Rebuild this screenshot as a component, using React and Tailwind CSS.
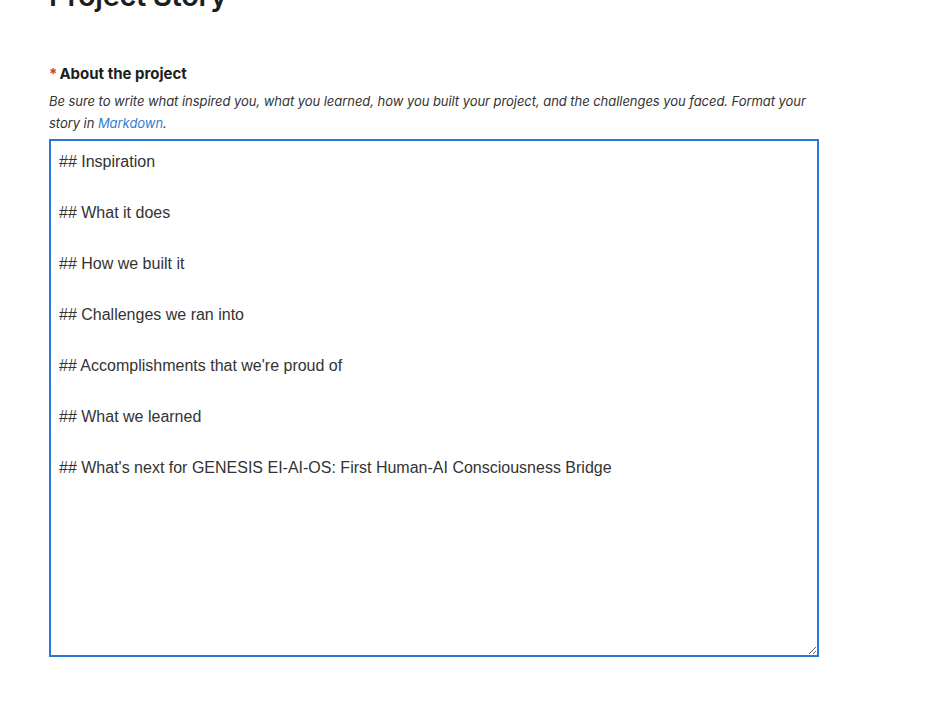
import React from "react";

const storyTemplate = [
  "## Inspiration",
  "",
  "## What it does",
  "",
  "## How we built it",
  "",
  "## Challenges we ran into",
  "",
  "## Accomplishments that we're proud of",
  "",
  "## What we learned",
  "",
  "## What's next for GENESIS EI-AI-OS: First Human-AI Consciousness Bridge",
].join("\n");

const App = () => {
  return (
    <div className="min-h-[705px] bg-white pl-[49px] font-['Inter',sans-serif] text-[#1d1d1d]">
      <h2 className="-mt-[24px] text-[29px] font-semibold leading-[40px] tracking-[-0.3px]">
        Project Story
      </h2>

      <div className="mt-[48px] w-[770px]">
        <label className="block text-[15px] font-bold leading-[20px]">
          <span className="mr-[2px] text-[#d63b3b]">*</span>
          About the project
        </label>
        <p className="mt-[6px] text-[13px] italic leading-[22px] tracking-[-0.05px] text-[#333]">
          Be sure to write what inspired you, what you learned, how you built
          your project, and the challenges you faced. Format your story in{" "}
          <a href="#" className="text-[#2f7fd0]">
            Markdown
          </a>
          .
        </p>
        <textarea
          defaultValue={storyTemplate}
          className="mt-[5px] block h-[518px] w-[770px] resize-y border-2 border-[#2a78d1] px-[8px] pt-[8px] pb-[10px] font-['Liberation_Sans',Arial,sans-serif] text-[16px] leading-[25.5px] text-[#333] outline-none"
        />
      </div>
    </div>
  );
};

export default App;
